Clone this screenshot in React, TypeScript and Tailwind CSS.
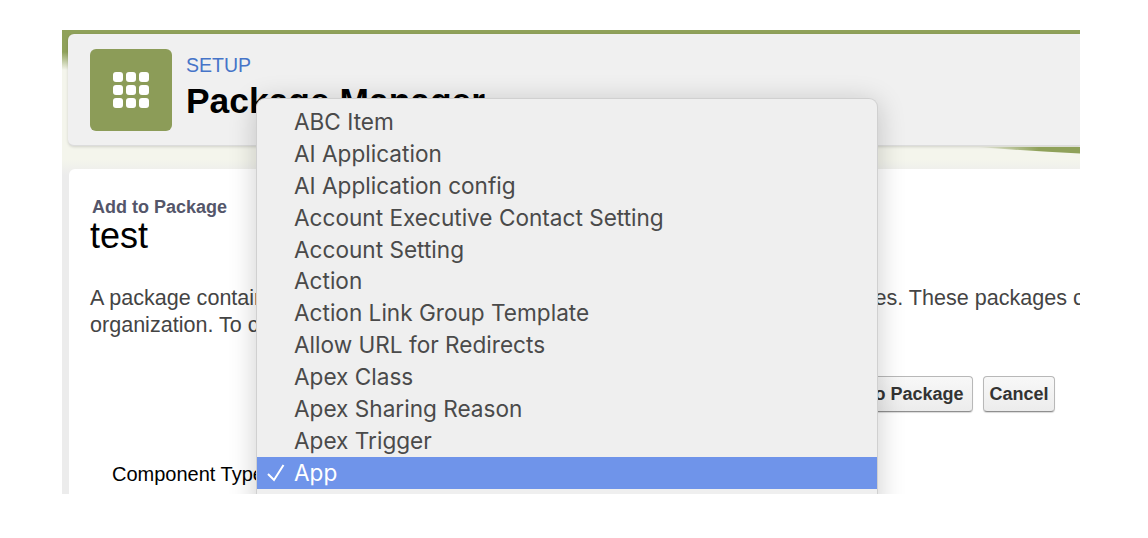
const menuItems = [
  'ABC Item',
  'AI Application',
  'AI Application config',
  'Account Executive Contact Setting',
  'Account Setting',
  'Action',
  'Action Link Group Template',
  'Allow URL for Redirects',
  'Apex Class',
  'Apex Sharing Reason',
  'Apex Trigger',
]

const buttonClass =
  'h-[36px] rounded-[4px] border border-[#b8b8b8] border-b-[#8f8f8f] bg-[linear-gradient(180deg,#f8f8f8,#ececec)] text-[18px] font-bold text-[#333] shadow-[0_1px_1px_rgba(0,0,0,0.15)]'

function GridIcon() {
  return (
    <div className="grid grid-cols-3 gap-x-[3px] gap-y-[3px]">
      {Array.from({ length: 9 }).map((_, i) => (
        <span key={i} className="w-[10px] h-[10px] rounded-[3px] bg-white" />
      ))}
    </div>
  )
}

function Dropdown() {
  return (
    <div className="absolute left-[194px] top-[68px] w-[622px] h-[420px] rounded-t-[9px] border border-[#d0d0d0] border-b-0 bg-[#efefef] pt-[7px] shadow-[0_4px_28px_rgba(0,0,0,0.2)] font-['Inter',sans-serif] text-[22.6px] text-[#4a4a4a]">
      {menuItems.map((item) => (
        <div key={item} className="h-[31.9px] leading-[31px] pl-[37px] whitespace-nowrap">
          {item}
        </div>
      ))}
      <div className="h-[32px] bg-[#6f94ea] text-white flex items-center whitespace-nowrap">
        <svg className="w-[37px] h-[32px] shrink-0" viewBox="0 0 37 32" fill="none">
          <path d="M11 17 L17 23 L26.5 8" stroke="white" strokeWidth="2" />
        </svg>
        <span className="leading-[30.4px]">App</span>
      </div>
    </div>
  )
}

export default function App() {
  return (
    <div className="w-[1148px] h-[538px] bg-white pt-[30px] pl-[62px] font-['Liberation_Sans',Arial,sans-serif]">
      <div className="relative w-[1018px] h-[464px] overflow-hidden bg-[linear-gradient(180deg,#8fa15a_0px,#8fa15a_22px,#f4f5ec_40px,#f4f5ec_130px,#ececec_145px,#ececec_100%)]">
        <div className="ml-[6px] mt-[4px] h-[112px] rounded-l-[6px] bg-[#f0f0f0] border-b border-[#dcdcdc] shadow-[0_1px_3px_rgba(0,0,0,0.15)] flex items-start pl-[22px] pt-[15px]">
          <div className="w-[82px] h-[82px] rounded-[6px] bg-[#8c9c58] flex items-center justify-center">
            <GridIcon />
          </div>
          <div className="ml-[14px]">
            <div className="text-[19.5px] leading-[32px] text-[#4674c8]">SETUP</div>
            <div className="text-[35.4px] leading-[41px] font-bold text-black whitespace-nowrap">Package Manager</div>
          </div>
        </div>

        <svg className="absolute left-[915px] top-[117px]" width="103" height="7" viewBox="0 0 103 7">
          <defs>
            <linearGradient id="streak" x1="0" x2="1" y1="0" y2="0">
              <stop offset="0" stopColor="#8fa15a" stopOpacity="0" />
              <stop offset="0.6" stopColor="#8fa15a" />
              <stop offset="1" stopColor="#8fa15a" />
            </linearGradient>
          </defs>
          <path d="M0 0 L103 0 L103 6.5 Q50 4 0 0 Z" fill="url(#streak)" />
        </svg>

        <div className="relative ml-[7px] mt-[23px] h-[325px] rounded-tl-[6px] bg-white pl-[21px] pt-[28px]">
          <div className="ml-[2px] text-[18px] leading-[20px] font-bold text-[#54566a]">Add to Package</div>
          <div className="text-[36px] leading-[38px] text-black">test</div>
          <div className="mt-[29px] text-[21.55px] leading-[27px] text-[#444] whitespace-nowrap">
            <div>A package contains components such as apps, objects, reports, and email templates. These packages can</div>
            <div>organization. To create a package, add the components you want to include.</div>
          </div>
          <div className="mt-[38px] flex justify-end gap-[10px] pr-[25px]">
            <button className={`${buttonClass} w-[154px]`}>Add to Package</button>
            <button className={`${buttonClass} w-[72px]`}>Cancel</button>
          </div>
          <div className="mt-[50px] ml-[22px] text-[20px] leading-[24px] text-black">Component Type</div>
        </div>

        <Dropdown />
      </div>
    </div>
  )
}
